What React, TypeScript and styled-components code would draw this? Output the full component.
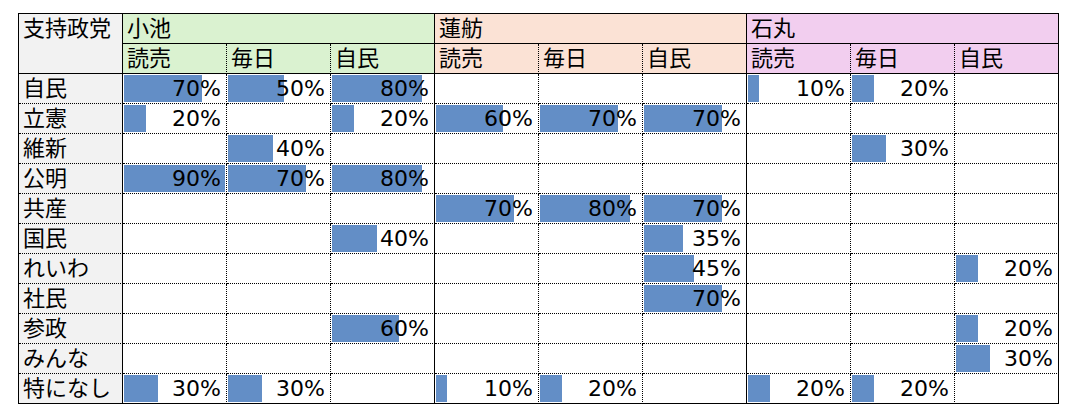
import React from "react";
import styled, { createGlobalStyle } from "styled-components";

const GlobalStyle = createGlobalStyle`
  html, body {
    margin: 0;
    padding: 0;
    background: #ffffff;
  }
  body {
    font-family: "DejaVu Sans", "Noto Sans CJK JP", sans-serif;
  }
`;

type Group = {
  name: string;
  color: string;
};

const groups: Group[] = [
  { name: "小池", color: "#daf2d0" },
  { name: "蓮舫", color: "#fbe2d5" },
  { name: "石丸", color: "#f2ceef" },
];

const sources = ["読売", "毎日", "自民"];

// null = 空欄
const rows: { party: string; values: (number | null)[] }[] = [
  { party: "自民", values: [70, 50, 80, null, null, null, 10, 20, null] },
  { party: "立憲", values: [20, null, 20, 60, 70, 70, null, null, null] },
  { party: "維新", values: [null, 40, null, null, null, null, null, 30, null] },
  { party: "公明", values: [90, 70, 80, null, null, null, null, null, null] },
  { party: "共産", values: [null, null, null, 70, 80, 70, null, null, null] },
  { party: "国民", values: [null, null, 40, null, null, 35, null, null, null] },
  { party: "れいわ", values: [null, null, null, null, null, 45, null, null, 20] },
  { party: "社民", values: [null, null, null, null, null, 70, null, null, null] },
  { party: "参政", values: [null, null, 60, null, null, null, null, null, 20] },
  { party: "みんな", values: [null, null, null, null, null, null, null, null, 30] },
  { party: "特になし", values: [30, 30, null, 10, 20, null, 20, 20, null] },
];

const App = () => {
  return (
    <>
      <GlobalStyle />
      <Page>
        <Sheet>
          <CornerCell>支持政党</CornerCell>
          {groups.map((g) => (
            <GroupCell key={g.name} $bg={g.color}>
              {g.name}
            </GroupCell>
          ))}
          {groups.map((g) =>
            sources.map((s, si) => (
              <SourceCell
                key={g.name + s}
                $bg={g.color}
                $groupEnd={si === sources.length - 1}
              >
                {s}
              </SourceCell>
            ))
          )}
          {rows.map((r, ri) => {
            const lastRow = ri === rows.length - 1;
            return (
              <React.Fragment key={r.party}>
                <PartyCell $lastRow={lastRow}>{r.party}</PartyCell>
                {r.values.map((v, vi) => (
                  <ValueCell
                    key={vi}
                    $lastRow={lastRow}
                    $groupEnd={vi % 3 === 2}
                  >
                    {v !== null && (
                      <>
                        <Bar style={{ width: `${v * 1.12}px` }} />
                        <Value>{v}%</Value>
                      </>
                    )}
                  </ValueCell>
                ))}
              </React.Fragment>
            );
          })}
        </Sheet>
      </Page>
    </>
  );
};
export default App;

const Page = styled.div`
  padding: 13px 0 0 18px;
`;

const Sheet = styled.div`
  display: grid;
  grid-template-columns: repeat(10, 104px);
  grid-auto-rows: 30px;
  width: max-content;
  border-top: 1px solid #000;
  border-left: 1px solid #000;
  font-size: 22px;
  color: #000;
`;

const BaseCell = styled.div`
  box-sizing: border-box;
  position: relative;
  display: flex;
  align-items: center;
  padding: 0 4px 0 4px;
  line-height: 29px;
  white-space: nowrap;
  overflow: hidden;
`;

const CornerCell = styled(BaseCell)`
  grid-row: span 2;
  align-items: flex-start;
  background: #f2f2f2;
  border-right: 1px solid #000;
  border-bottom: 1px solid #000;
`;

const GroupCell = styled(BaseCell)<{ $bg: string }>`
  grid-column: span 3;
  background: ${(p) => p.$bg};
  border-right: 1px solid #000;
  border-bottom: 1px solid #000;
`;

const SourceCell = styled(BaseCell)<{ $bg: string; $groupEnd: boolean }>`
  background: ${(p) => p.$bg};
  border-right: 1px ${(p) => (p.$groupEnd ? "solid" : "dotted")} #000;
  border-bottom: 1px solid #000;
`;

const PartyCell = styled(BaseCell)<{ $lastRow: boolean }>`
  background: #f2f2f2;
  border-right: 1px solid #000;
  border-bottom: 1px ${(p) => (p.$lastRow ? "solid" : "dotted")} #000;
`;

const ValueCell = styled(BaseCell)<{ $lastRow: boolean; $groupEnd: boolean }>`
  justify-content: flex-end;
  padding-right: 5px;
  background: #ffffff;
  border-right: 1px ${(p) => (p.$groupEnd ? "solid" : "dotted")} #000;
  border-bottom: 1px ${(p) => (p.$lastRow ? "solid" : "dotted")} #000;
`;

const Bar = styled.div`
  position: absolute;
  left: 1px;
  top: 1px;
  bottom: 1px;
  background: #638ec6;
`;

const Value = styled.span`
  position: relative;
`;
